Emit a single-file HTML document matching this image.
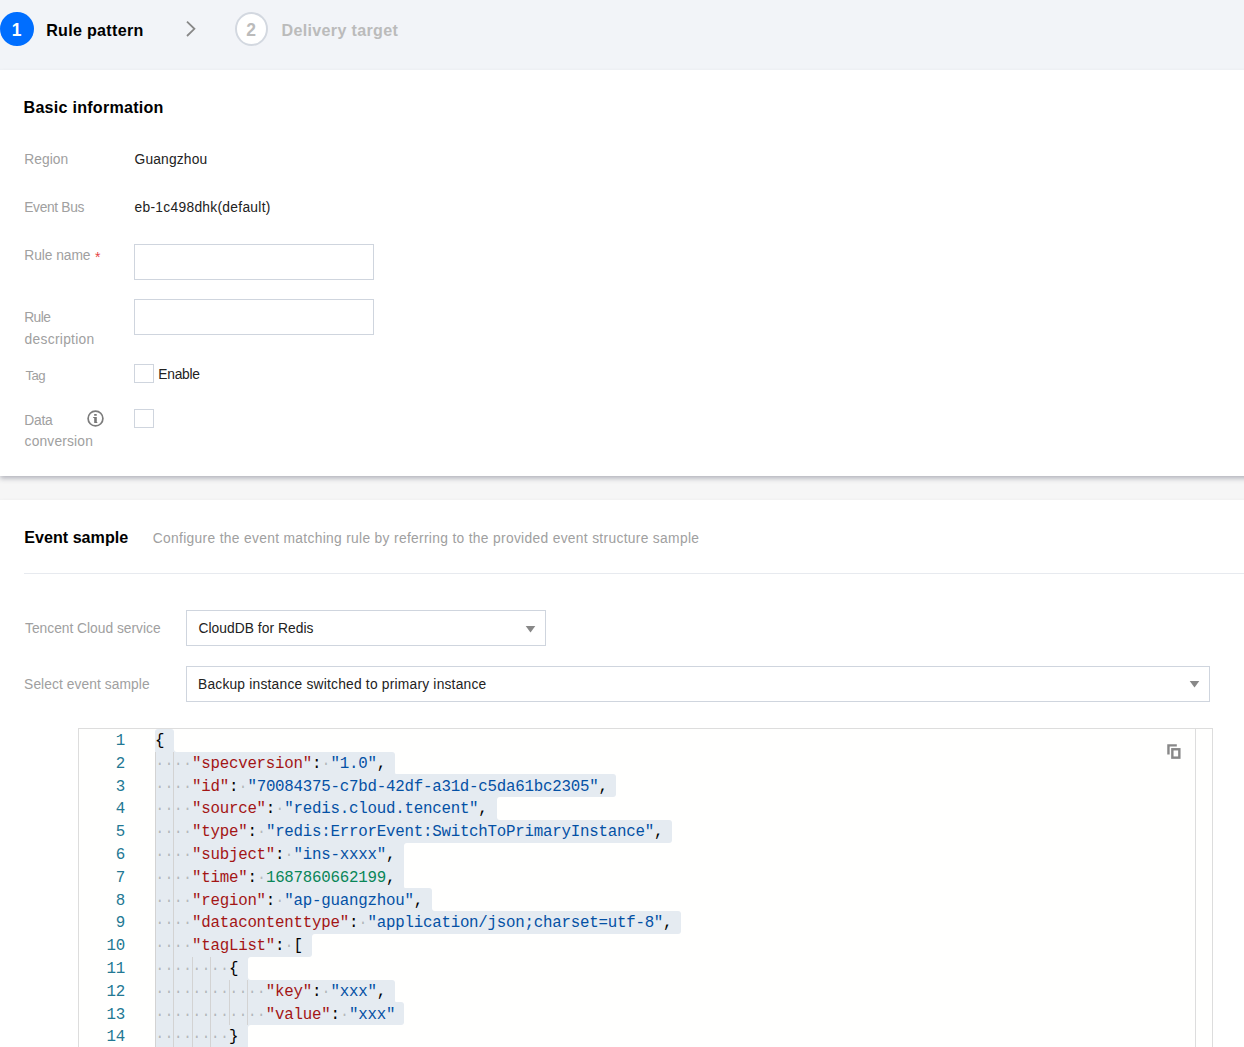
<!DOCTYPE html>
<html lang="en"><head><meta charset="utf-8"><title>Create event rule</title>
<style>
html,body{margin:0;padding:0}
body{width:1244px;height:1047px;overflow:hidden;position:relative;background:#f6f6f6;font-family:"Liberation Sans", sans-serif;}
.hdr{position:absolute;left:0;top:0;width:1244px;height:70px;background:#f2f4f8}
.card{position:absolute;left:0;width:1300px;background:#fff;box-shadow:0 2.6px 5px 0 rgba(54,58,80,.35)}
#c1{top:70px;height:406px}
#c2{top:500px;height:560px}
.t{position:absolute;white-space:nowrap;line-height:24px;height:24px}
.circ{position:absolute;border-radius:50%;box-sizing:border-box}
.inp{position:absolute;box-sizing:border-box;border:1px solid #cfd5de;background:#fff}
.hr{position:absolute;left:24px;top:573px;width:1220px;height:1px;background:#e7eaef}
.ed{position:absolute;left:78px;top:728px;width:1135px;height:330px;box-sizing:border-box;border:1px solid #ddd;background:#fffffe}
.ovr{position:absolute;left:1195px;top:729px;width:17px;height:330px;box-sizing:border-box;border-left:1px solid #ddd;background:#fffffe}
.sel{position:absolute;background:#e5ebf1}
.cc{position:absolute;left:0.5px;top:0;right:0;bottom:0;background:#fffffe}
.gd{position:absolute;width:1px;background:#d3d3d3}
.ln{position:absolute;left:78px;width:47px;text-align:right;font-family:"Liberation Mono", monospace;font-size:15.8px;letter-spacing:-0.242px;line-height:23px;height:23px;color:#237893;white-space:pre}
.cl{position:absolute;left:155.0px;font-family:"Liberation Mono", monospace;font-size:15.8px;letter-spacing:-0.242px;line-height:23px;height:23px;color:#000;white-space:pre}
.k{color:#a31515}.s{color:#0451a5}.n{color:#098658}.p{color:#000}.ws{color:rgba(51,51,51,.28)}
</style></head><body>
<div class="hdr"></div>
<div class="card" id="c1"></div>
<div class="card" id="c2"></div>

<div class="circ" style="left:0.2px;top:12.1px;width:33.6px;height:33.8px;background:#006eff"></div>
<svg style="position:absolute;left:183.6px;top:18.6px" width="14" height="20" viewBox="0 0 14 20"><path d="M3 2.6 L10.4 9.8 L3 17" fill="none" stroke="#888" stroke-width="1.8"/></svg>
<div class="circ" style="left:234.8px;top:11.9px;width:33.2px;height:34px;background:#fff;border:2px solid #d3d8e0"></div>

<div class="inp" style="left:134px;top:244px;width:240px;height:36px"></div>
<div class="inp" style="left:134px;top:299px;width:240px;height:36px"></div>
<div class="inp" style="left:134px;top:364px;width:19.6px;height:19px"></div>
<div class="inp" style="left:134px;top:409px;width:19.6px;height:19px"></div>
<svg style="position:absolute;left:86px;top:409px" width="19" height="19" viewBox="0 0 19 19"><circle cx="9.5" cy="9.5" r="7.4" fill="none" stroke="#7c7c7c" stroke-width="1.7"/><path d="M8.1 5.4 q0-0.5 0.5-0.5 h1.7 q0.5 0 0.5 0.5 v0.9 q0 0.5-0.5 0.5 h-1.7 q-0.5 0-0.5-0.5z M7.2 8.05 H10.8 V13.1 H11.3 V14 H8.2 V9 H7.2z" fill="#777"/></svg>

<div class="hr"></div>
<div class="inp" style="left:186px;top:610px;width:360px;height:36px"></div>
<svg style="position:absolute;left:524px;top:624px" width="14" height="11"><path d="M1.7 2 H11.3 L6.5 8.4 Z" fill="#888"/></svg>
<div class="inp" style="left:186px;top:666px;width:1024px;height:36px"></div>
<svg style="position:absolute;left:1188px;top:679px" width="14" height="11"><path d="M1.7 2 H11.3 L6.5 8.4 Z" fill="#888"/></svg>

<div class="ed"></div>
<div class="ovr"></div>
<svg style="position:absolute;left:1166px;top:743px" width="16" height="17" viewBox="0 0 16 17"><path d="M2.45 11.6 V2.35 H10.8" fill="none" stroke="#888" stroke-width="2.4"/><rect x="6.35" y="6.25" width="7.0" height="8.4" fill="none" stroke="#888" stroke-width="2.4"/></svg>
<div class="sel" style="left:155.3px;top:728.75px;width:18.44px;height:23.10px;border-radius:3px 3px 0px 0"></div>
<div class="sel" style="left:173.24px;top:748.55px;width:3.5px;height:3.3px"><div class="cc" style="border-bottom-left-radius:3px"></div></div>
<div class="sel" style="left:155.3px;top:751.55px;width:239.77px;height:23.10px;border-radius:0px 3px 0px 0"></div>
<div class="sel" style="left:394.57px;top:771.35px;width:3.5px;height:3.3px"><div class="cc" style="border-bottom-left-radius:3px"></div></div>
<div class="sel" style="left:155.3px;top:774.35px;width:461.10px;height:23.10px;border-radius:0px 3px 3px 0"></div>
<div class="sel" style="left:155.3px;top:797.15px;width:341.21px;height:23.10px;border-radius:0px 0px 0px 0"></div>
<div class="sel" style="left:496.01px;top:797.15px;width:3.5px;height:3px"><div class="cc" style="border-top-left-radius:3px"></div></div>
<div class="sel" style="left:496.01px;top:816.95px;width:3.5px;height:3.3px"><div class="cc" style="border-bottom-left-radius:3px"></div></div>
<div class="sel" style="left:155.3px;top:819.95px;width:516.43px;height:23.10px;border-radius:0px 3px 3px 0"></div>
<div class="sel" style="left:155.3px;top:842.75px;width:248.99px;height:23.10px;border-radius:0px 0px 0px 0"></div>
<div class="sel" style="left:403.79px;top:842.75px;width:3.5px;height:3px"><div class="cc" style="border-top-left-radius:3px"></div></div>
<div class="sel" style="left:155.3px;top:865.55px;width:248.99px;height:23.10px;border-radius:0px 0px 0px 0"></div>
<div class="sel" style="left:403.79px;top:885.35px;width:3.5px;height:3.3px"><div class="cc" style="border-bottom-left-radius:3px"></div></div>
<div class="sel" style="left:155.3px;top:888.35px;width:276.66px;height:23.10px;border-radius:0px 3px 0px 0"></div>
<div class="sel" style="left:431.46px;top:908.15px;width:3.5px;height:3.3px"><div class="cc" style="border-bottom-left-radius:3px"></div></div>
<div class="sel" style="left:155.3px;top:911.15px;width:525.65px;height:23.10px;border-radius:0px 3px 3px 0"></div>
<div class="sel" style="left:155.3px;top:933.95px;width:156.77px;height:23.10px;border-radius:0px 0px 3px 0"></div>
<div class="sel" style="left:311.57px;top:933.95px;width:3.5px;height:3px"><div class="cc" style="border-top-left-radius:3px"></div></div>
<div class="sel" style="left:155.3px;top:956.75px;width:92.22px;height:23.10px;border-radius:0px 0px 0px 0"></div>
<div class="sel" style="left:247.02px;top:956.75px;width:3.5px;height:3px"><div class="cc" style="border-top-left-radius:3px"></div></div>
<div class="sel" style="left:247.02px;top:976.55px;width:3.5px;height:3.3px"><div class="cc" style="border-bottom-left-radius:3px"></div></div>
<div class="sel" style="left:155.3px;top:979.55px;width:239.77px;height:23.10px;border-radius:0px 3px 0px 0"></div>
<div class="sel" style="left:394.57px;top:999.35px;width:3.5px;height:3.3px"><div class="cc" style="border-bottom-left-radius:3px"></div></div>
<div class="sel" style="left:155.3px;top:1002.35px;width:248.99px;height:23.10px;border-radius:0px 3px 3px 0"></div>
<div class="sel" style="left:155.3px;top:1025.15px;width:92.22px;height:23.10px;border-radius:0px 0px 0px 0"></div>
<div class="sel" style="left:247.02px;top:1025.15px;width:3.5px;height:3px"><div class="cc" style="border-top-left-radius:3px"></div></div>
<div class="gd" style="left:155.30px;top:751.55px;height:23.10px"></div>
<div class="gd" style="left:173.24px;top:751.55px;height:23.10px"></div>
<div class="gd" style="left:155.30px;top:774.35px;height:23.10px"></div>
<div class="gd" style="left:173.24px;top:774.35px;height:23.10px"></div>
<div class="gd" style="left:155.30px;top:797.15px;height:23.10px"></div>
<div class="gd" style="left:173.24px;top:797.15px;height:23.10px"></div>
<div class="gd" style="left:155.30px;top:819.95px;height:23.10px"></div>
<div class="gd" style="left:173.24px;top:819.95px;height:23.10px"></div>
<div class="gd" style="left:155.30px;top:842.75px;height:23.10px"></div>
<div class="gd" style="left:173.24px;top:842.75px;height:23.10px"></div>
<div class="gd" style="left:155.30px;top:865.55px;height:23.10px"></div>
<div class="gd" style="left:173.24px;top:865.55px;height:23.10px"></div>
<div class="gd" style="left:155.30px;top:888.35px;height:23.10px"></div>
<div class="gd" style="left:173.24px;top:888.35px;height:23.10px"></div>
<div class="gd" style="left:155.30px;top:911.15px;height:23.10px"></div>
<div class="gd" style="left:173.24px;top:911.15px;height:23.10px"></div>
<div class="gd" style="left:155.30px;top:933.95px;height:23.10px"></div>
<div class="gd" style="left:173.24px;top:933.95px;height:23.10px"></div>
<div class="gd" style="left:155.30px;top:956.75px;height:23.10px"></div>
<div class="gd" style="left:173.24px;top:956.75px;height:23.10px"></div>
<div class="gd" style="left:191.69px;top:956.75px;height:23.10px"></div>
<div class="gd" style="left:210.13px;top:956.75px;height:23.10px"></div>
<div class="gd" style="left:155.30px;top:979.55px;height:23.10px"></div>
<div class="gd" style="left:173.24px;top:979.55px;height:23.10px"></div>
<div class="gd" style="left:191.69px;top:979.55px;height:23.10px"></div>
<div class="gd" style="left:210.13px;top:979.55px;height:23.10px"></div>
<div class="gd" style="left:228.58px;top:979.55px;height:23.10px"></div>
<div class="gd" style="left:247.02px;top:979.55px;height:23.10px"></div>
<div class="gd" style="left:155.30px;top:1002.35px;height:23.10px"></div>
<div class="gd" style="left:173.24px;top:1002.35px;height:23.10px"></div>
<div class="gd" style="left:191.69px;top:1002.35px;height:23.10px"></div>
<div class="gd" style="left:210.13px;top:1002.35px;height:23.10px"></div>
<div class="gd" style="left:228.58px;top:1002.35px;height:23.10px"></div>
<div class="gd" style="left:247.02px;top:1002.35px;height:23.10px"></div>
<div class="gd" style="left:155.30px;top:1025.15px;height:23.10px"></div>
<div class="gd" style="left:173.24px;top:1025.15px;height:23.10px"></div>
<div class="gd" style="left:191.69px;top:1025.15px;height:23.10px"></div>
<div class="gd" style="left:210.13px;top:1025.15px;height:23.10px"></div>
<div class="ln" style="top:730.00px">1</div>
<div class="cl" style="top:730.00px"><span class="p">{</span></div>
<div class="ln" style="top:753.00px">2</div>
<div class="cl" style="top:753.00px"><span class="ws">····</span><span class="k">"specversion"</span><span class="p">:</span><span class="ws">·</span><span class="s">"1.0"</span><span class="p">,</span></div>
<div class="ln" style="top:776.00px">3</div>
<div class="cl" style="top:776.00px"><span class="ws">····</span><span class="k">"id"</span><span class="p">:</span><span class="ws">·</span><span class="s">"70084375-c7bd-42df-a31d-c5da61bc2305"</span><span class="p">,</span></div>
<div class="ln" style="top:798.00px">4</div>
<div class="cl" style="top:798.00px"><span class="ws">····</span><span class="k">"source"</span><span class="p">:</span><span class="ws">·</span><span class="s">"redis.cloud.tencent"</span><span class="p">,</span></div>
<div class="ln" style="top:821.00px">5</div>
<div class="cl" style="top:821.00px"><span class="ws">····</span><span class="k">"type"</span><span class="p">:</span><span class="ws">·</span><span class="s">"redis:ErrorEvent:SwitchToPrimaryInstance"</span><span class="p">,</span></div>
<div class="ln" style="top:844.00px">6</div>
<div class="cl" style="top:844.00px"><span class="ws">····</span><span class="k">"subject"</span><span class="p">:</span><span class="ws">·</span><span class="s">"ins-xxxx"</span><span class="p">,</span></div>
<div class="ln" style="top:867.00px">7</div>
<div class="cl" style="top:867.00px"><span class="ws">····</span><span class="k">"time"</span><span class="p">:</span><span class="ws">·</span><span class="n">1687860662199</span><span class="p">,</span></div>
<div class="ln" style="top:890.00px">8</div>
<div class="cl" style="top:890.00px"><span class="ws">····</span><span class="k">"region"</span><span class="p">:</span><span class="ws">·</span><span class="s">"ap-guangzhou"</span><span class="p">,</span></div>
<div class="ln" style="top:912.00px">9</div>
<div class="cl" style="top:912.00px"><span class="ws">····</span><span class="k">"datacontenttype"</span><span class="p">:</span><span class="ws">·</span><span class="s">"application/json;charset=utf-8"</span><span class="p">,</span></div>
<div class="ln" style="top:935.00px">10</div>
<div class="cl" style="top:935.00px"><span class="ws">····</span><span class="k">"tagList"</span><span class="p">:</span><span class="ws">·</span><span class="p">[</span></div>
<div class="ln" style="top:958.00px">11</div>
<div class="cl" style="top:958.00px"><span class="ws">········</span><span class="p">{</span></div>
<div class="ln" style="top:981.00px">12</div>
<div class="cl" style="top:981.00px"><span class="ws">············</span><span class="k">"key"</span><span class="p">:</span><span class="ws">·</span><span class="s">"xxx"</span><span class="p">,</span></div>
<div class="ln" style="top:1004.00px">13</div>
<div class="cl" style="top:1004.00px"><span class="ws">············</span><span class="k">"value"</span><span class="p">:</span><span class="ws">·</span><span class="s">"xxx"</span></div>
<div class="ln" style="top:1026.00px">14</div>
<div class="cl" style="top:1026.00px"><span class="ws">········</span><span class="p">}</span></div>
<div class="t" id="s1n" style="left:11.70px;top:18.00px;font-size:17.5px;font-weight:700;color:#fff;letter-spacing:0.000px">1</div>
<div class="t" id="s1t" style="left:46.18px;top:18.00px;font-size:16.1px;font-weight:700;color:#000;letter-spacing:0.295px">Rule pattern</div>
<div class="t" id="s2n" style="left:246.30px;top:18.00px;font-size:17.5px;font-weight:700;color:#bbb;letter-spacing:0.000px">2</div>
<div class="t" id="s2t" style="left:281.44px;top:18.00px;font-size:16.1px;font-weight:700;color:#bbb;letter-spacing:0.332px">Delivery target</div>
<div class="t" id="h1" style="left:23.54px;top:95.00px;font-size:16.1px;font-weight:700;color:#000;letter-spacing:0.248px">Basic information</div>
<div class="t" id="l1" style="left:24.20px;top:148.00px;font-size:13.8px;font-weight:400;color:#a0a0a0;letter-spacing:0.059px">Region</div>
<div class="t" id="v1" style="left:134.54px;top:148.00px;font-size:13.8px;font-weight:400;color:#222;letter-spacing:0.159px">Guangzhou</div>
<div class="t" id="l2" style="left:24.20px;top:196.00px;font-size:13.8px;font-weight:400;color:#a0a0a0;letter-spacing:-0.325px">Event Bus</div>
<div class="t" id="v2" style="left:134.58px;top:196.00px;font-size:13.8px;font-weight:400;color:#222;letter-spacing:0.284px">eb-1c498dhk(default)</div>
<div class="t" id="l3" style="left:24.30px;top:244.00px;font-size:13.8px;font-weight:400;color:#a0a0a0;letter-spacing:-0.060px">Rule name</div>
<div class="t" id="l3s" style="left:95.00px;top:245.00px;font-size:14.0px;font-weight:400;color:#e54545;letter-spacing:0.000px">*</div>
<div class="t" id="l4a" style="left:24.20px;top:306.00px;font-size:13.8px;font-weight:400;color:#a0a0a0;letter-spacing:-0.587px">Rule</div>
<div class="t" id="l4b" style="left:24.56px;top:328.00px;font-size:13.8px;font-weight:400;color:#a0a0a0;letter-spacing:0.299px">description</div>
<div class="t" id="l5" style="left:25.38px;top:364.00px;font-size:13.2px;font-weight:400;color:#a0a0a0;letter-spacing:-0.495px">Tag</div>
<div class="t" id="v5" style="left:158.33px;top:363.00px;font-size:13.8px;font-weight:400;color:#222;letter-spacing:-0.286px">Enable</div>
<div class="t" id="l6a" style="left:24.20px;top:409.00px;font-size:13.8px;font-weight:400;color:#a0a0a0;letter-spacing:-0.217px">Data</div>
<div class="t" id="l6b" style="left:24.59px;top:430.00px;font-size:13.8px;font-weight:400;color:#a0a0a0;letter-spacing:0.170px">conversion</div>
<div class="t" id="h2" style="left:24.16px;top:525.00px;font-size:16.1px;font-weight:700;color:#000;letter-spacing:0.030px">Event sample</div>
<div class="t" id="h2d" style="left:152.79px;top:527.00px;font-size:13.8px;font-weight:400;color:#a0a0a0;letter-spacing:0.321px">Configure the event matching rule by referring to the provided event structure sample</div>
<div class="t" id="l7" style="left:25.05px;top:617.00px;font-size:13.8px;font-weight:400;color:#a0a0a0;letter-spacing:-0.011px">Tencent Cloud service</div>
<div class="t" id="v7" style="left:198.40px;top:617.00px;font-size:13.8px;font-weight:400;color:#222;letter-spacing:0.052px">CloudDB for Redis</div>
<div class="t" id="l8" style="left:24.12px;top:673.00px;font-size:13.8px;font-weight:400;color:#a0a0a0;letter-spacing:0.068px">Select event sample</div>
<div class="t" id="v8" style="left:197.97px;top:673.00px;font-size:13.8px;font-weight:400;color:#222;letter-spacing:0.212px">Backup instance switched to primary instance</div>
</body></html>
